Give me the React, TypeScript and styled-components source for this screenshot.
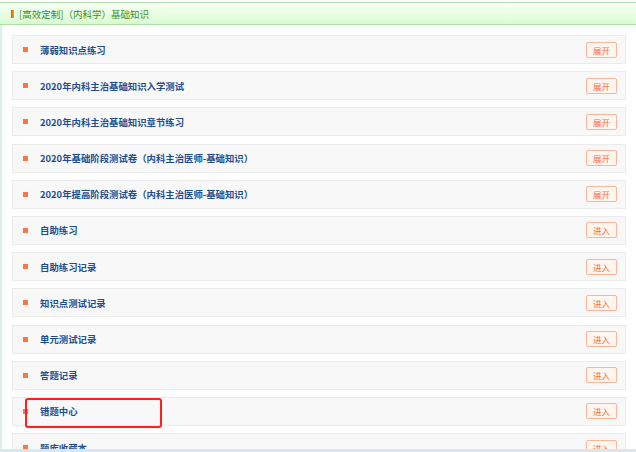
import styled, { createGlobalStyle } from "styled-components";

const GlobalStyle = createGlobalStyle`
  html, body {
    margin: 0;
    padding: 0;
    background: #ffffff;
    overflow: hidden;
  }
  body {
    font-family: "Noto Sans CJK SC", "Noto Sans", sans-serif;
  }
`;

const Page = styled.div`
  height: 452px;
  padding-top: 2px;
  box-sizing: border-box;
  display: flex;
  flex-direction: column;
  overflow: hidden;
`;

const Header = styled.div`
  height: 23px;
  flex-shrink: 0;
  box-sizing: border-box;
  display: flex;
  align-items: center;
  gap: 5px;
  padding-left: 11px;
  border-top: 1px solid #b4e2b0;
  border-bottom: 1px solid #ace0a6;
  background: linear-gradient(#f9fff6, #d9fcd1);
`;

const HeaderMark = styled.span`
  width: 3px;
  height: 8px;
  background: linear-gradient(90deg, #c96a00, #f59a1c);
`;

const HeaderTitle = styled.span`
  font-size: 9.5px;
  color: #3a8d26;
`;

const Body = styled.div`
  flex: 1;
  min-height: 0;
  overflow: hidden;
  border-left: 2px solid #dcefe8;
  padding: 10px 10px 0 10px;
`;

const Row = styled.div`
  position: relative;
  height: 29px;
  box-sizing: border-box;
  display: flex;
  align-items: center;
  padding: 0 8px 0 10px;
  margin-bottom: 7.2px;
  background: #f8f8f8;
  border: 1px solid #ebebeb;
`;

const Bullet = styled.span`
  width: 5px;
  height: 5px;
  background: #ff7440;
  margin-right: 12px;
  flex-shrink: 0;
`;

const Title = styled.span`
  flex: 1;
  font-size: 9.4px;
  font-weight: 700;
  color: #1d4f8f;
`;

const ActionButton = styled.span`
  width: 31px;
  height: 16px;
  box-sizing: border-box;
  display: flex;
  align-items: center;
  justify-content: center;
  border: 1px solid #ffb497;
  border-radius: 2px;
  background: #fff6ef;
  color: #ff6b3d;
  font-size: 8.5px;
`;

const Highlight = styled.div`
  position: absolute;
  left: 12px;
  top: 0px;
  width: 137px;
  height: 30px;
  box-sizing: border-box;
  border: 2px solid #ff1f1f;
  border-radius: 3px;
`;

const BottomEdge = styled.div`
  position: fixed;
  left: 0;
  right: 0;
  bottom: 0;
  height: 3px;
  background: #d8e7f6;
`;

type Item = { title: string; action: "展开" | "进入"; marked?: boolean };

const items: Item[] = [
  { title: "薄弱知识点练习", action: "展开" },
  { title: "2020年内科主治基础知识入学测试", action: "展开" },
  { title: "2020年内科主治基础知识章节练习", action: "展开" },
  { title: "2020年基础阶段测试卷（内科主治医师-基础知识）", action: "展开" },
  { title: "2020年提高阶段测试卷（内科主治医师-基础知识）", action: "展开" },
  { title: "自助练习", action: "进入" },
  { title: "自助练习记录", action: "进入" },
  { title: "知识点测试记录", action: "进入" },
  { title: "单元测试记录", action: "进入" },
  { title: "答题记录", action: "进入" },
  { title: "错题中心", action: "进入", marked: true },
  { title: "题库收藏本", action: "进入" },
];

const App = () => {
  return (
    <>
      <GlobalStyle />
      <Page>
        <Header>
          <HeaderMark />
          <HeaderTitle>[高效定制]（内科学）基础知识</HeaderTitle>
        </Header>
        <Body>
          {items.map((item) => (
            <Row key={item.title}>
              <Bullet />
              <Title>{item.title}</Title>
              <ActionButton>{item.action}</ActionButton>
              {item.marked && <Highlight />}
            </Row>
          ))}
        </Body>
      </Page>
      <BottomEdge />
    </>
  );
};

export default App;
